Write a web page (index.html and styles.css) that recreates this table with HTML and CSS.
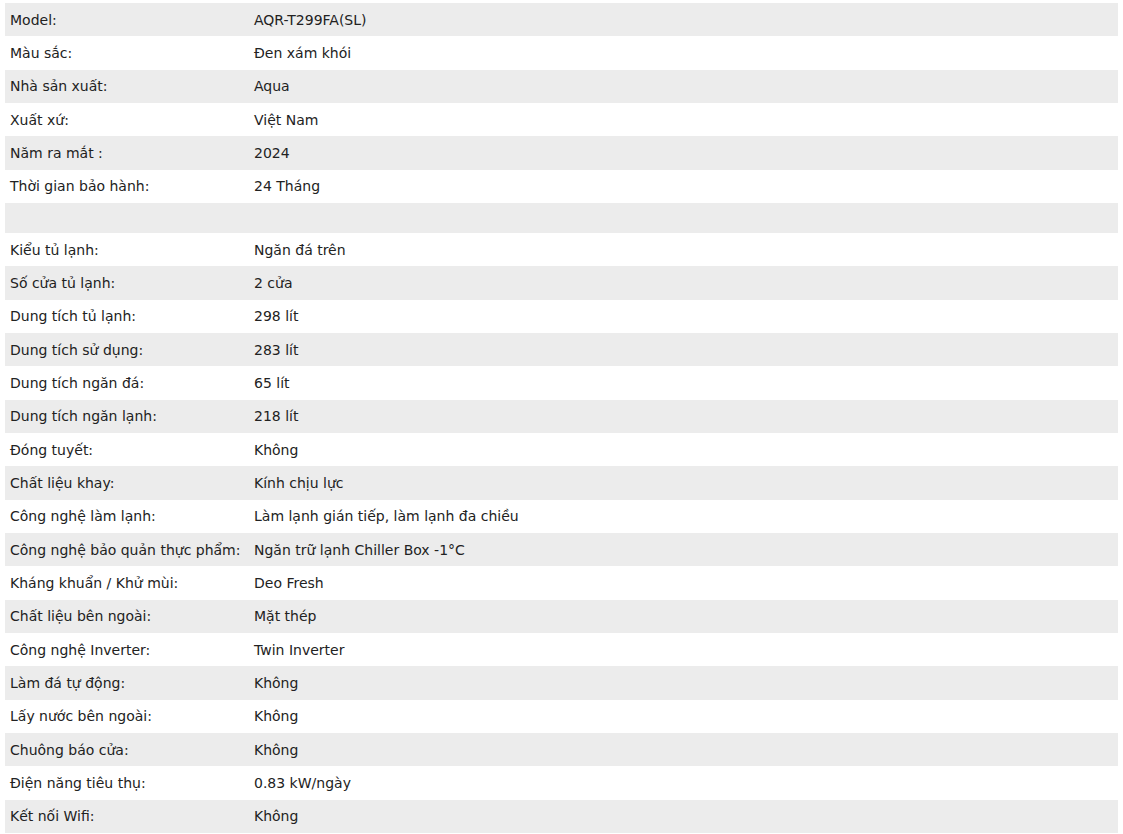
FILE: index.html
```html
<!DOCTYPE html>
<html lang="vi">
<head>
<meta charset="utf-8">
<title>Thông số kỹ thuật</title>
<link rel="stylesheet" href="styles.css">
</head>
<body>
<table class="specs">
  <tbody>
    <tr><td class="label">Model:</td><td class="value">AQR-T299FA(SL)</td></tr>
    <tr><td class="label">Màu sắc:</td><td class="value">Đen xám khói</td></tr>
    <tr><td class="label">Nhà sản xuất:</td><td class="value">Aqua</td></tr>
    <tr><td class="label">Xuất xứ:</td><td class="value">Việt Nam</td></tr>
    <tr><td class="label">Năm ra mắt :</td><td class="value">2024</td></tr>
    <tr><td class="label">Thời gian bảo hành:</td><td class="value">24 Tháng</td></tr>
    <tr class="spacer"><td class="label"></td><td class="value"></td></tr>
    <tr><td class="label">Kiểu tủ lạnh:</td><td class="value">Ngăn đá trên</td></tr>
    <tr><td class="label">Số cửa tủ lạnh:</td><td class="value">2 cửa</td></tr>
    <tr><td class="label">Dung tích tủ lạnh:</td><td class="value">298 lít</td></tr>
    <tr><td class="label">Dung tích sử dụng:</td><td class="value">283 lít</td></tr>
    <tr><td class="label">Dung tích ngăn đá:</td><td class="value">65 lít</td></tr>
    <tr><td class="label">Dung tích ngăn lạnh:</td><td class="value">218 lít</td></tr>
    <tr><td class="label">Đóng tuyết:</td><td class="value">Không</td></tr>
    <tr><td class="label">Chất liệu khay:</td><td class="value">Kính chịu lực</td></tr>
    <tr><td class="label">Công nghệ làm lạnh:</td><td class="value">Làm lạnh gián tiếp, làm lạnh đa chiều</td></tr>
    <tr><td class="label">Công nghệ bảo quản thực phẩm:</td><td class="value">Ngăn trữ lạnh Chiller Box -1°C</td></tr>
    <tr><td class="label">Kháng khuẩn / Khử mùi:</td><td class="value">Deo Fresh</td></tr>
    <tr><td class="label">Chất liệu bên ngoài:</td><td class="value">Mặt thép</td></tr>
    <tr><td class="label">Công nghệ Inverter:</td><td class="value">Twin Inverter</td></tr>
    <tr><td class="label">Làm đá tự động:</td><td class="value">Không</td></tr>
    <tr><td class="label">Lấy nước bên ngoài:</td><td class="value">Không</td></tr>
    <tr><td class="label">Chuông báo cửa:</td><td class="value">Không</td></tr>
    <tr><td class="label">Điện năng tiêu thụ:</td><td class="value">0.83 kW/ngày</td></tr>
    <tr><td class="label">Kết nối Wifi:</td><td class="value">Không</td></tr>
  </tbody>
</table>
</body>
</html>
```
FILE: styles.css
```css
html, body {
  margin: 0;
  padding: 0;
  background: #ffffff;
}

body {
  padding: 3px 5px 0 5px;
  font-family: "DejaVu Sans", Tahoma, sans-serif;
  font-size: 14px;
  color: #222222;
}

.specs {
  width: 1113px;
  border-collapse: collapse;
  border-spacing: 0;
  table-layout: fixed;
}

.specs td {
  height: 33.333px;
  padding: 0 5px;
  vertical-align: middle;
  white-space: nowrap;
  box-sizing: border-box;
}

.specs .label {
  width: 244px;
}

.specs tr:nth-child(odd) td {
  background: #ececec;
}

.specs tr.spacer td {
  height: 30px;
}
```
